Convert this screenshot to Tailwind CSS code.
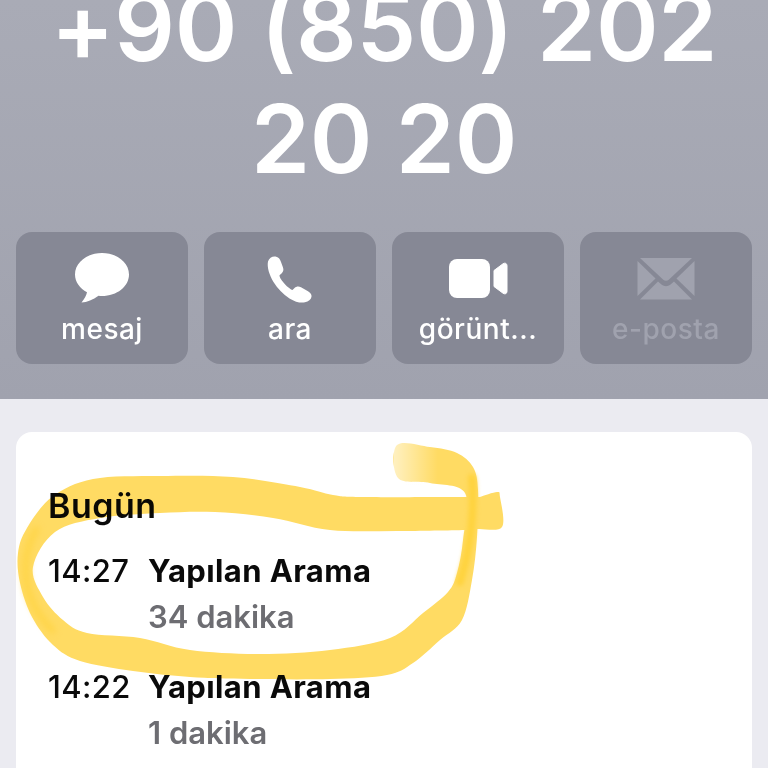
<!DOCTYPE html>
<html lang="en">
<head>
    <meta charset="UTF-8">
    <meta name="viewport" content="width=device-width, initial-scale=1.0">
    <title>Arama</title>
    <script src="https://cdn.jsdelivr.net/npm/@tailwindcss/browser@4"></script>
</head>
<body class="relative h-[768px] w-[768px] overflow-hidden bg-[#ebebf1] font-['Inter','Liberation_Sans',sans-serif]">
    <header class="h-[399px] overflow-hidden bg-gradient-to-b from-[#a9abb6] to-[#a0a2ae] px-4">
        <h1 class="-mx-4 -mt-[29px] text-center text-[95px] leading-[112px] font-semibold tracking-[-0.3px] text-white">+90 (850) 202<br>20 20</h1>
        <div class="mt-[37px] grid grid-cols-4 gap-4">
            <div class="flex h-[132px] flex-col items-center rounded-2xl bg-[#868895] pt-5 text-[28px] leading-[34px] font-medium tracking-[0.5px] text-white">
                <svg class="h-[52px] w-[56px]" viewBox="0 0 56 52" fill="#fff"><path d="M28 1C13 1 1 10.500 1 22.500C1 30 6 36.500 13 40.300C12.300 43.500 10.500 47 7.500 50.500C13 50.300 19 48 24.500 43.800C25.700 43.900 26.800 44 28 44C43 44 55 34.500 55 22.500C55 10.500 43 1 28 1Z"/></svg>
                <span class="mt-2">mesaj</span>
            </div>
            <div class="flex h-[132px] flex-col items-center rounded-2xl bg-[#868895] pt-5 text-[28px] leading-[34px] font-medium tracking-[0.5px] text-white">
                <svg class="h-[52px] w-[52px]" viewBox="0 0 52 52" fill="#fff"><path d="M4 9.500C5 6 8.500 4 11.500 4.500C14.500 5 16 7 17 10L19 15.500C20 18 19 20 17.500 21.500L15.500 23.200C15.300 24.500 16.800 27.500 20.300 31.500C23.800 35.500 27 37.700 28.500 37.900L30.500 36C32.300 34.500 34.500 34 37 35.300L44 39.300C46.500 40.700 47.800 42.500 47.500 44.800C47 47.500 44.500 49.500 41 50.300C37 51.200 31.500 50.300 25.500 46.500C19 42.300 13.500 36.500 9.500 30C5.500 23.500 2.800 15 4 9.500Z"/></svg>
                <span class="mt-2">ara</span>
            </div>
            <div class="flex h-[132px] flex-col items-center rounded-2xl bg-[#868895] pt-5 text-[28px] leading-[34px] font-medium tracking-[0.5px] text-white">
                <svg class="h-[52px] w-[60px]" viewBox="0 0 60 52" fill="#fff"><rect x="1" y="7" width="41" height="39" rx="8"/><path d="M46 18.500L55 11.800C57 10.400 59 11.500 59 13.500V39.500C59 41.500 57 42.600 55 41.200L46 34.500Z" stroke="#fff" stroke-linejoin="round"/></svg>
                <span class="mt-2">görünt...</span>
            </div>
            <div class="flex h-[132px] flex-col items-center rounded-2xl bg-[#868895] pt-5 text-[28px] leading-[34px] font-medium tracking-[0.5px] text-[#a0a2ae]">
                <svg class="h-[52px] w-[60px]" viewBox="0 0 60 52" fill="#a0a2ae"><path d="M4 6H56L33 27.500C31 29.300 29 29.300 27 27.500Z"/><path d="M1.500 9V44L19.500 26.500Z"/><path d="M58.500 9V44L40.500 26.500Z"/><path d="M4 47.500H56L38 29.500L34.500 32.500C31.500 34.800 28.500 34.800 25.500 32.500L22 29.500Z"/></svg>
                <span class="mt-2">e-posta</span>
            </div>
        </div>
    </header>

    <main class="mx-4 mt-[33px] h-[400px] rounded-2xl bg-white pt-[54px] pl-8 text-[#0a0a0a]">
        <h2 class="text-[34px] leading-[40px] font-semibold tracking-[0.5px]">Bugün</h2>
        <div class="mt-[22px] flex text-[31px] leading-[46px]">
            <span class="w-[100px] font-medium tracking-[0.4px]">14:27</span>
            <div>
                <div class="font-bold tracking-[0.4px]">Yapılan Arama</div>
                <div class="font-semibold text-[#6d6d72]">34 dakika</div>
            </div>
        </div>
        <div class="mt-6 flex text-[31px] leading-[46px]">
            <span class="w-[100px] font-medium tracking-[0.4px]">14:22</span>
            <div>
                <div class="font-bold tracking-[0.4px]">Yapılan Arama</div>
                <div class="font-semibold text-[#6d6d72]">1 dakika</div>
            </div>
        </div>
    </main>

    <!-- highlighter mark drawn over the screenshot -->
    <svg class="pointer-events-none absolute inset-0 mix-blend-multiply" width="768" height="768" viewBox="0 0 768 768">
        <defs>
            <linearGradient id="fade" x1="0" x2="1" y1="0" y2="0">
                <stop offset="0" stop-color="#fff" stop-opacity="0.6"/>
                <stop offset="1" stop-color="#fff" stop-opacity="0"/>
            </linearGradient>
        </defs>
        <path id="marker" fill="#ffdb63"/>
        <path class="blur-[2px]" fill="none" stroke="#ffd33f" stroke-width="8" stroke-linecap="round" d="M472 478C474 500 472 530 468 550C466 562 463 572 460 582"/>
        <path class="blur-[3px]" fill="none" stroke="#ffd549" stroke-width="7" stroke-linecap="round" d="M36 530C26 548 23 565 28 590C33 606 40 618 52 630"/>
        <rect x="394" y="443" width="44" height="42" fill="url(#fade)"/>
    </svg>

    <script>
        // outline of the marker stroke, smoothed through the points
        const pts = [[480,497],[497,492],[500,497],[502,527],[478,529],[465,530],[397,531],[330,530],[273,518],[215,512],[160,513],[100,518],[55,532],[33,567],[43,597],[63,620],[87,633],[140,638],[190,650],[260,654],[330,650],[390,638],[423,613],[448,592],[457,573],[463,540],[465,493],[430,483],[398,478],[397,445],[430,447],[457,453],[473,467],[478,490],[477,537],[472,580],[462,620],[440,640],[413,663],[387,675],[330,679],[250,679],[190,677],[133,671],[80,661],[53,645],[32,617],[20,583],[18,553],[27,528],[52,497],[93,479],[160,476],[233,477],[300,487],[333,495],[363,497],[463,497]];
        let d = `M${pts[0][0]} ${pts[0][1]}`;
        for (let i = 0; i < pts.length - 1; i++) {
            const p0 = pts[Math.max(i - 1, 0)], p1 = pts[i], p2 = pts[i + 1], p3 = pts[Math.min(i + 2, pts.length - 1)];
            d += `C${p1[0] + (p2[0] - p0[0]) / 6} ${p1[1] + (p2[1] - p0[1]) / 6} ${p2[0] - (p3[0] - p1[0]) / 6} ${p2[1] - (p3[1] - p1[1]) / 6} ${p2[0]} ${p2[1]}`;
        }
        document.getElementById('marker').setAttribute('d', d + 'Z');
    </script>
</body>
</html>
